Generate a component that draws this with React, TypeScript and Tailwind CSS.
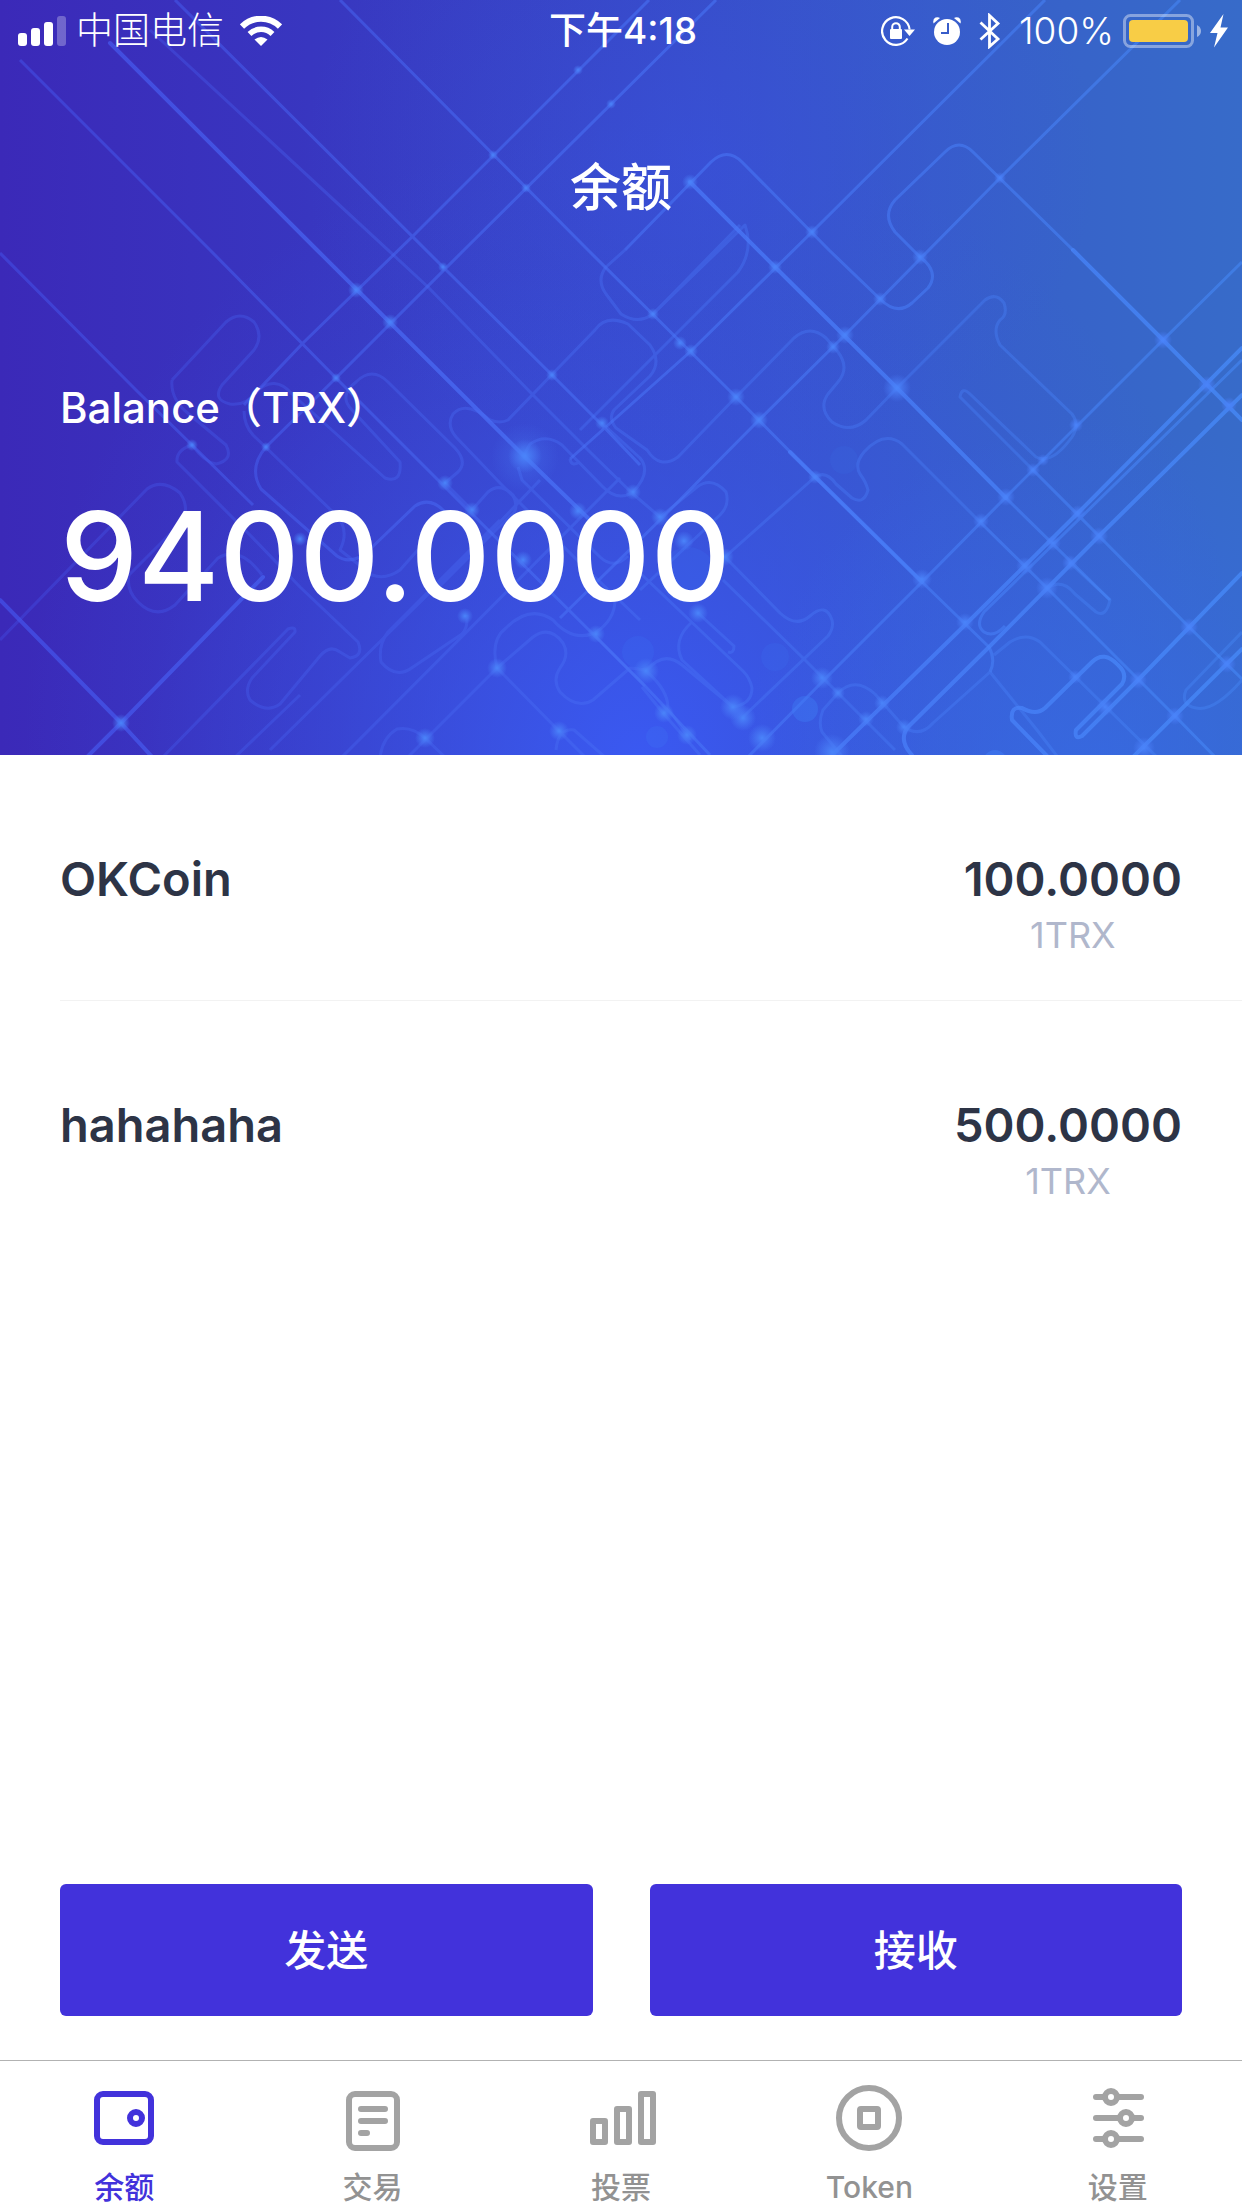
import type { ReactNode } from "react";

const holdings = [
  { name: "OKCoin", amount: "100.0000", price: "1TRX" },
  { name: "hahahaha", amount: "500.0000", price: "1TRX" },
];

function CircuitBackdrop() {
  return (
    <svg
      className="absolute inset-0 h-full w-full"
      viewBox="0 0 1242 755"
      preserveAspectRatio="xMidYMid slice"
      fill="none"
      aria-hidden="true"
    >
      <defs>
        <linearGradient id="base" x1="0" y1="0" x2="1242" y2="0" gradientUnits="userSpaceOnUse">
          <stop offset="0" stopColor="#3b29b8" />
          <stop offset="0.25" stopColor="#3836c0" />
          <stop offset="0.5" stopColor="#3748c6" />
          <stop offset="0.75" stopColor="#375dc9" />
          <stop offset="1" stopColor="#376bc9" />
        </linearGradient>
        <radialGradient id="low" cx="0" cy="0" r="1" gradientUnits="userSpaceOnUse" gradientTransform="translate(640 760) scale(620 640)">
          <stop offset="0" stopColor="#3a59f2" />
          <stop offset="0.5" stopColor="#3a56ea" stopOpacity="0.42" />
          <stop offset="0.8" stopColor="#3a56ea" stopOpacity="0.1" />
          <stop offset="1" stopColor="#3a56ea" stopOpacity="0" />
        </radialGradient>
        <radialGradient id="high" cx="0" cy="0" r="1" gradientUnits="userSpaceOnUse" gradientTransform="translate(700 160) scale(400 320)">
          <stop offset="0" stopColor="#3a52e2" stopOpacity="0.5" />
          <stop offset="0.5" stopColor="#3a52e2" stopOpacity="0.2" />
          <stop offset="1" stopColor="#3a52e2" stopOpacity="0" />
        </radialGradient>
        <radialGradient id="corner" cx="0" cy="0" r="1" gradientUnits="userSpaceOnUse" gradientTransform="translate(1100 780) scale(360 360)">
          <stop offset="0" stopColor="#376ae4" stopOpacity="0.8" />
          <stop offset="1" stopColor="#376ae4" stopOpacity="0" />
        </radialGradient>
        <radialGradient id="node">
          <stop offset="0" stopColor="#4a84fa" />
          <stop offset="0.4" stopColor="#4a80f8" stopOpacity="0.6" />
          <stop offset="1" stopColor="#4a7cf8" stopOpacity="0" />
        </radialGradient>
        <linearGradient id="line" x1="0" y1="0" x2="1242" y2="0" gradientUnits="userSpaceOnUse">
          <stop offset="0" stopColor="#4450e8" />
          <stop offset="0.5" stopColor="#4a74f8" />
          <stop offset="1" stopColor="#478bfa" />
        </linearGradient>
      </defs>
      <rect width="1242" height="755" fill="url(#base)" />
      <rect width="1242" height="755" fill="url(#low)" />
      <rect width="1242" height="755" fill="url(#high)" />
      <rect width="1242" height="755" fill="url(#corner)" />

      {/* faint traces */}
      <g stroke="url(#line)" strokeWidth="3" opacity="0.38" strokeLinejoin="round">
        <path d="M150 30 L428 287 L533 395 L590 452 L633 494 L660 517" />
        <path d="M0 640 L147 489 Q162 478 180 493 Q190 508 182 522 L129 575 Q126 590 138 602 Q156 620 175 605 L218 558 Q240 545 262 575" />
        <path d="M172 380 L226 322 Q240 310 254 322 Q264 336 254 350 L222 385 Q212 400 230 404 Q246 406 256 392 Q275 374 292 394 L385 478 Q402 484 400 462 L352 410 Q338 396 356 382 Q372 366 388 382 L455 448 Q468 462 458 472 L445 483 L472 510" />
        <path d="M172 380 Q170 400 190 415 L226 445 Q234 460 216 464 Q204 462 192 445 Q176 450 177 462 L250 535 L300 587 L358 642 Q364 656 350 658 L340 652 Q330 644 320 656 L280 704 Q266 714 250 700 Q244 690 252 678 L295 632 Q296 626 288 629 L160 760" />
        <path d="M244 411 Q244 425 253 435 L336 515 Q350 530 340 550 L372 575 Q386 580 400 570 L440 525" />
        <path d="M490 420 Q466 400 453 414 Q446 425 456 437 L500 483 L577 560 L640 620" />
        <path d="M490 420 Q500 424 508 420 L595 330 Q606 314 628 324 L650 345 Q662 362 650 376 L614 410 Q608 418 616 428 L647 450 Q660 470 678 457 L736 397 L794 338 Q810 324 826 338 L838 352 Q850 368 838 382 L828 394 Q818 408 832 422 Q850 434 866 420 L897 388 L985 300 Q996 292 1004 303 Q1008 315 1000 320 Q992 330 1000 345 L1072 414 Q1080 425 1072 437 Q1052 465 1036 457 L970 394 Q962 386 960 397 L1033 470" />
        <path d="M523 457 L530 444 Q546 433 562 445 L603 487 Q618 502 633 492 Q652 472 640 458 L602 423 M518 467 L522 480 L600 557 Q614 570 628 556" />
        <path d="M606 267 Q596 280 606 294 L621 314 Q638 325 653 314 L740 225 M606 267 L625 250" />
        <path d="M653 314 L745 225 Q754 250 738 272 L580 430" />
        <path d="M570 459 Q571 467 580 462" />
        <path d="M815 477 Q826 470 836 484 L852 498 Q864 505 868 490 Q866 482 860 474 Q854 464 864 452 Q884 430 902 444 L981 523" />
        <path d="M472 510 L488 492 Q500 482 513 495 Q520 510 510 516 L433 593 M467 615 Q468 628 462 634 L413 667 Q396 680 381 662 Q378 645 388 632 L500 520" />
        <path d="M497 668 Q490 640 506 628 Q530 604 553 620 Q572 642 595 633 Q615 620 615 600 M497 668 L533 637 Q550 625 563 643 Q570 655 560 668 Q552 680 560 692 Q577 710 593 700 L630 668 L647 670" />
        <path d="M497 668 L558 730 L590 762 M497 668 L400 765 M380 758 Q382 738 397 729 Q412 726 425 738 L448 760 M556 750 Q558 728 574 730 L606 758" />
        <path d="M270 750 L473 550 L540 480 M342 757 L620 478 M232 760 L300 695" />
        <path d="M660 517 L697 487 Q712 476 726 492 Q730 505 720 515 L640 590" />
        <path d="M815 477 L725 557 L780 613 Q796 628 810 616 Q826 602 832 620 Q834 628 828 636 L743 717" />
        <path d="M692 622 Q672 640 682 660 L733 707 Q752 704 752 688 Q750 678 743 671 L640 573 M698 613 L734 646 Q734 654 728 652" />
        <path d="M647 670 Q664 650 682 665 L733 707 M642 687 L663 713 L700 755 M647 672 Q668 690 668 708 L690 740" />
        <path d="M596 637 L645 686" />
        <path d="M723 580 L803 658 L895 750" />
        <path d="M838 693 Q855 676 875 694 L904 727 Q920 738 933 723 L990 672 M838 693 L823 710 Q818 722 822 732 L845 760 M990 672 L1037 730 L1060 760 M994 655 L1010 642 Q1026 632 1040 642 L1165 765" />
        <path d="M1047 588 Q1062 578 1075 594 L1096 612 Q1106 618 1110 600 L1070 563" />
        <path d="M1242 632 L1186 690 Q1180 705 1196 708 Q1214 712 1242 680" />
      </g>

      {/* main traces */}
      <g stroke="url(#line)" strokeWidth="3" opacity="0.55" strokeLinejoin="round">
        <path d="M20 60 L210 250 L336 378 L469 511 L596 637 L645 686 L710 755" />
        <path d="M0 253 L137 391 L192 445 L253 505" />
        <path d="M175 0 L443 267 L552 375 L602 425 L640 465" />
        <path d="M340 0 L588 250 L736 397 L815 477 L922 582 L989 647 Q996 660 990 672" />
        <path d="M649 0 L414 235 L303 343 L244 405" />
        <path d="M716 0 L464 250 L336 378 L266 447 Q248 468 261 489 L337 556 Q350 565 366 553 L415 506 Q430 496 445 512" />
        <path d="M1045 0 L812 232 L691 351 L570 459" />
        <path d="M1180 0 L1000 178 L845 335 L759 420 L661 519 L560 618" />
        <path d="M625 250 L711 162 Q727 147 742 162 L829 250 L880 299 Q897 316 912 303 L928 288 Q940 272 920 257 L895 232 Q882 215 895 200 L945 152 Q959 138 973 152 L1073 250" />
        <path d="M1242 262 L1163 340 L1006 497 L922 582 L823 681 L745 760" />
        <path d="M1242 360 L984 612 Q975 625 984 632 Q994 638 1005 626" />
        <path d="M1033 470 L1099 536 L1189 627 L1242 679" />
        <path d="M981 523 L1047 588 L1175 716 L1220 762" />
        <path d="M1006 498 L1110 600" />
      </g>

      {/* bright traces */}
      <g stroke="url(#line)" strokeWidth="4" opacity="0.75" strokeLinejoin="round" strokeLinecap="round">
        <path d="M110 43 L317 250 L525 457 L590 520" />
        <path d="M0 600 L121 723 L155 760" />
        <path d="M81 763 L121 723 L263 577" />
        <path d="M690 182 L775 267 L897 388 L1006 498" />
        <path d="M790 452 L922 582" />
        <path d="M1073 250 L1163 340 L1242 420" />
        <path d="M1242 348 L1078 513 L965 625 L825 762" />
        <path d="M1242 395 L1099 536 L987 649 L908 727 Q898 740 912 755" />
        <path d="M1242 573 L1138 680 L1082 736 Q1074 740 1076 730 L1122 684 Q1128 674 1118 665 Q1104 650 1092 662 L1045 708 Q1036 716 1022 708 Q1010 706 1012 720 L1051 760" />
        <path d="M1242 649 L1130 760" />
      </g>

      {/* light nodes where traces cross */}
      <g fill="url(#node)">
        <circle cx="525" cy="457" r="34" opacity="0.35" />
        <circle cx="525" cy="456" r="17" />
        {[
          [578, 70, 5], [493, 155, 5], [526, 188, 5], [611, 104, 5], [690, 182, 8], [812, 232, 7], [1000, 178, 6],
          [356, 290, 8], [390, 322, 8], [443, 267, 5], [336, 378, 5], [266, 447, 5], [192, 445, 6], [552, 375, 6],
          [445, 483, 8], [472, 510, 8], [578, 511, 9], [523, 560, 9], [602, 423, 7], [633, 492, 8], [660, 517, 9],
          [596, 634, 9], [497, 668, 10], [425, 738, 10], [559, 731, 10], [121, 723, 9], [465, 616, 8], [300, 539, 7],
          [653, 314, 6], [680, 343, 7], [691, 351, 7], [736, 397, 9], [759, 420, 9], [775, 267, 7], [845, 335, 9],
          [833, 347, 7], [897, 388, 14], [880, 299, 7], [920, 257, 8], [815, 477, 7], [922, 579, 10], [965, 622, 9],
          [1006, 497, 9], [1033, 470, 7], [1043, 460, 6], [1076, 425, 7], [981, 521, 8], [1025, 566, 9], [1053, 543, 8],
          [1078, 513, 8], [1099, 536, 9], [1047, 588, 11], [1163, 340, 9], [1207, 385, 9], [1229, 405, 8], [1070, 563, 8],
          [1189, 627, 9], [1227, 664, 9], [1138, 680, 9], [1175, 716, 9], [1144, 748, 11], [1105, 707, 9], [1075, 677, 7],
          [822, 678, 11], [762, 738, 14], [743, 718, 13], [733, 707, 13], [646, 671, 13], [664, 713, 10], [687, 735, 10],
          [882, 703, 8], [866, 719, 8], [832, 752, 18], [904, 727, 8], [725, 557, 9], [684, 541, 10], [698, 613, 10], [838, 693, 7],
        ].map(([cx, cy, r]) => (
          <circle key={`${cx}-${cy}`} cx={cx} cy={cy} r={r} />
        ))}
      </g>
      <g fill="#3f7cf6">
        <circle cx="805" cy="709" r="13" opacity="0.4" />
        <circle cx="775" cy="657" r="14" opacity="0.14" />
        <circle cx="638" cy="652" r="16" opacity="0.16" />
        <circle cx="657" cy="737" r="11" opacity="0.2" />
        <circle cx="844" cy="460" r="14" opacity="0.1" />
        <circle cx="688" cy="575" r="28" opacity="0.16" />
        <circle cx="995" cy="762" r="12" opacity="0.5" />
      </g>
    </svg>
  );
}

function SignalIcon() {
  return (
    <svg width="48" height="30" viewBox="0 0 48 30" fill="#fff" role="img" aria-label="Signal">
      <rect x="0" y="17" width="9" height="13" rx="3" />
      <rect x="13" y="12" width="9" height="18" rx="3" />
      <rect x="26" y="6" width="9" height="24" rx="3" />
      <rect x="39" y="0" width="9" height="30" rx="3" opacity="0.28" />
    </svg>
  );
}

function WifiIcon() {
  return (
    <svg width="42" height="30" viewBox="0 0 42 30" fill="none" stroke="#fff" role="img" aria-label="Wi-Fi">
      <path d="M2 10.5 A27 27 0 0 1 40 10.5" strokeWidth="6" />
      <path d="M9.5 18 A16.5 16.5 0 0 1 32.5 18" strokeWidth="5.5" />
      <path d="M21 30 L14.5 23.5 Q21 18.5 27.5 23.5 Z" fill="#fff" stroke="none" />
    </svg>
  );
}

function RotationLockIcon() {
  return (
    <svg width="34" height="30" viewBox="0 0 34 30" fill="none" role="img" aria-label="Rotation lock">
      <path d="M26.5 22.5 A13.8 13.8 0 1 1 28.6 13.5" stroke="#fff" strokeWidth="2.2" />
      <path d="M23 13.5 H34 L28.5 20 Z" fill="#fff" />
      <rect x="9" y="13" width="12" height="10" rx="1" fill="#fff" />
      <path d="M11.2 13.5 V11 a3.8 3.8 0 0 1 7.6 0 V13.5" stroke="#fff" strokeWidth="2" />
    </svg>
  );
}

function AlarmIcon() {
  return (
    <svg width="28" height="28" viewBox="0 0 28 28" fill="none" role="img" aria-label="Alarm">
      <circle cx="14" cy="15" r="13" fill="#fff" />
      <path d="M0.5 6.5 Q-0.5 2 2.5 0.6 Q5 -0.5 7 1 Z" fill="#fff" />
      <path d="M27.5 6.5 Q28.5 2 25.5 0.6 Q23 -0.5 21 1 Z" fill="#fff" />
      <path d="M15 6 V16 H8" stroke="#375cc9" strokeWidth="2" />
    </svg>
  );
}

function BluetoothIcon() {
  return (
    <svg width="22" height="36" viewBox="0 0 22 36" fill="none" stroke="#fff" strokeWidth="2.8" role="img" aria-label="Bluetooth">
      <path d="M1.5 9.5 L19 26 L10.5 33.5 V2.5 L19 10.5 L1.5 26.5" />
    </svg>
  );
}

function BatteryIcon() {
  return (
    <svg width="78" height="34" viewBox="0 0 78 34" fill="none" role="img" aria-label="Battery">
      <rect x="1.5" y="1.5" width="68" height="31" rx="6" stroke="#fff" strokeOpacity="0.4" strokeWidth="3" />
      <rect x="6" y="6" width="59" height="22" rx="4" fill="#f8cd46" />
      <path d="M74 11 Q78 13 78 17 Q78 21 74 23 Z" fill="#fff" fillOpacity="0.5" />
    </svg>
  );
}

function BoltIcon() {
  return (
    <svg width="18" height="34" viewBox="0 0 18 34" fill="#fff" role="img" aria-label="Charging">
      <path d="M13.5 0 L0 19 H7.5 L4 33.5 L18 13.5 H10.5 Z" />
    </svg>
  );
}

function IconFrame({ children }: { children: ReactNode }) {
  return (
    <svg
      className="overflow-visible"
      width="66"
      height="66"
      viewBox="0 0 66 66"
      fill="none"
      stroke="currentColor"
      strokeWidth="6"
      strokeLinecap="round"
      aria-hidden="true"
    >
      {children}
    </svg>
  );
}

const tabs = [
  {
    label: "余额",
    active: true,
    icon: (
      <IconFrame>
        <rect x="6" y="9" width="54" height="48" rx="6" />
        <circle cx="45" cy="33" r="6" />
      </IconFrame>
    ),
  },
  {
    label: "交易",
    active: false,
    icon: (
      <IconFrame>
        <rect x="9" y="9" width="48" height="54" rx="6" />
        <path d="M21 24 H45 M21 36 H45 M21 48 H27" />
      </IconFrame>
    ),
  },
  {
    label: "投票",
    active: false,
    icon: (
      <IconFrame>
        <g strokeLinejoin="round">
          <path d="M5 36 H17 V57 H5 Z" />
          <path d="M29 24 H41 V57 H29 Z" />
          <path d="M53 9 H65 V57 H53 Z" />
        </g>
      </IconFrame>
    ),
  },
  {
    label: "Token",
    active: false,
    icon: (
      <IconFrame>
        <circle cx="33" cy="33" r="30" />
        <rect x="24" y="24" width="18" height="18" rx="1" />
      </IconFrame>
    ),
  },
  {
    label: "设置",
    active: false,
    icon: (
      <IconFrame>
        <path d="M11 12 H20 M33 12 H56 M11 33 H35 M48 33 H56 M11 54 H20 M33 54 H56" />
        <circle cx="26" cy="12" r="6" />
        <circle cx="41" cy="33" r="6" />
        <circle cx="26" cy="54" r="6" />
      </IconFrame>
    ),
  },
];

export default function App() {
  return (
    <div className="flex min-h-screen flex-col bg-white font-['Inter','Noto_Sans_CJK_SC',sans-serif]">
      <header className="relative overflow-hidden bg-[#3748c4] pb-[123px] text-white">
        <CircuitBackdrop />
        <div className="relative">
          <div className="grid h-[62px] grid-cols-[1fr_auto_1fr] items-center pl-[18px] pr-[14px] text-[37px] leading-[60px]">
            <div className="flex items-center gap-[10px]">
              <SignalIcon />
              <span className="font-light">中国电信</span>
              <span className="pl-1.5">
                <WifiIcon />
              </span>
            </div>
            <time className="font-medium">下午4:18</time>
            <div className="flex items-center justify-end gap-[9px]">
              <div className="flex items-center gap-[18px]">
                <RotationLockIcon />
                <AlarmIcon />
                <BluetoothIcon />
                <span className="font-light">100%</span>
              </div>
              <BatteryIcon />
              <BoltIcon />
            </div>
          </div>
          <h1 className="mt-[90px] text-center text-[51px] font-medium leading-[72px]">余额</h1>
          <div className="mt-[154px] px-[60px]">
            <p className="text-[42px] font-medium leading-[60px]">Balance（TRX）</p>
            <p className="mt-[42px] text-[124px] font-medium leading-[152px]">9400.0000</p>
          </div>
        </div>
      </header>

      <main className="flex flex-1 flex-col">
        <ul className="pl-[60px]">
          {holdings.map((item) => (
            <li
              key={item.name}
              className="flex items-start justify-between border-b border-[#f2f2f2] pb-[43px] pr-[60px] pt-[94px] last:border-transparent"
            >
              <span className="text-[47px] font-semibold leading-[60px] text-[#2d3446]">{item.name}</span>
              <span className="flex flex-col items-center gap-1">
                <span className="text-[47px] font-semibold leading-[60px] text-[#2d3446]">{item.amount}</span>
                <span className="text-[36px] leading-[44px] text-[#b0b7cc]">{item.price}</span>
              </span>
            </li>
          ))}
        </ul>

        <div className="mt-auto grid grid-cols-2 gap-[57px] px-[60px] pb-11">
          <button type="button" className="h-[132px] rounded-md bg-[#4232db] text-[42px] font-medium text-white">
            发送
          </button>
          <button type="button" className="h-[132px] rounded-md bg-[#4232db] text-[42px] font-medium text-white">
            接收
          </button>
        </div>
      </main>

      <nav className="grid grid-cols-5 border-t border-[#b2b2b2] pt-6">
        {tabs.map((tab) => (
          <button
            key={tab.label}
            type="button"
            aria-current={tab.active ? "page" : undefined}
            className={
              tab.active
                ? "flex flex-col items-center gap-[15px] text-[#4232db]"
                : "flex flex-col items-center gap-[15px] text-[#a3a3a3]"
            }
          >
            {tab.icon}
            <span className={tab.active ? "text-[30px] font-medium leading-[42px]" : "text-[30px] font-medium leading-[42px] text-[#929292]"}>
              {tab.label}
            </span>
          </button>
        ))}
      </nav>
    </div>
  );
}
